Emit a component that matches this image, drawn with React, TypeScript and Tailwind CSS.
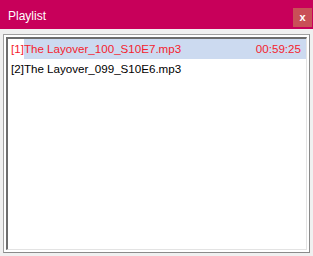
export default function App() {
  const font = { fontFamily: '"Liberation Sans", Arial, sans-serif' };
  return (
    <div className="w-[313px] h-[256px] bg-[#f0f0f0] flex flex-col" style={font}>
      {/* title bar */}
      <div className="h-[29px] bg-[#c8005a] flex items-center justify-between pl-[8px] pr-[1px]">
        <span className="text-white text-[12px] leading-none mt-[2px]">Playlist</span>
        <div className="w-[19px] h-[19px] mt-[6px] bg-[#c95057] flex items-center justify-center text-white text-[11px] font-bold leading-none">
          x
        </div>
      </div>

      {/* list frame */}
      <div className="flex-1 pt-[5px] px-[3px] pb-[3px] flex flex-col">
        <div className="flex-1 border border-t-[#a0a0a0] border-l-[#a0a0a0] border-r-[#8a8a8a] border-b-[#8a8a8a] bg-white p-[2px] flex flex-col">
          <div className="flex-1 border-t-2 border-l-2 border-r border-b border-t-[#6d6d6d] border-l-[#6d6d6d] border-r-[#e3e3e3] border-b-[#e3e3e3] bg-white pl-[3px] text-[11.6px]">
            <div className="h-[20px] flex items-center text-[#f5222d]">
              <span>[1]</span>
              <div className="flex-1 h-full bg-[#ccdaf0] flex items-center justify-between pr-[5px]">
                <span>The Layover_100_S10E7.mp3</span>
                <span>00:59:25</span>
              </div>
            </div>
            <div className="h-[20px] flex items-center text-black">
              <span>[2]The Layover_099_S10E6.mp3</span>
            </div>
          </div>
        </div>
      </div>
    </div>
  );
}
